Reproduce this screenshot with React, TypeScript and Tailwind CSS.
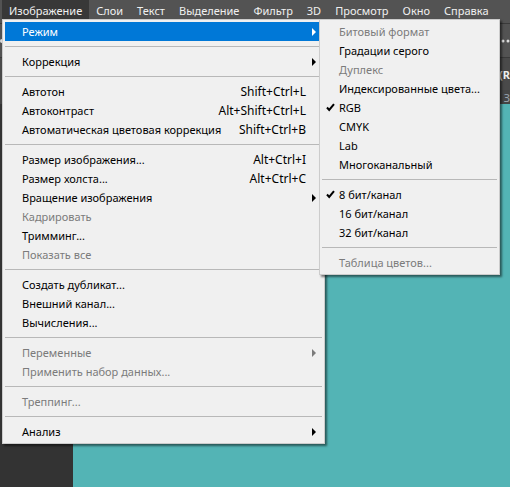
import { clsx } from 'clsx';

type Item = {
  label: string;
  shortcut?: string;
  disabled?: boolean;
  active?: boolean;
  submenu?: boolean;
  checked?: boolean;
};

const menuBar = ['Изображение', 'Слои', 'Текст', 'Выделение', 'Фильтр', '3D', 'Просмотр', 'Окно', 'Справка'];

const imageMenu: Item[][] = [
  [{ label: 'Режим', submenu: true, active: true }],
  [{ label: 'Коррекция', submenu: true }],
  [
    { label: 'Автотон', shortcut: 'Shift+Ctrl+L' },
    { label: 'Автоконтраст', shortcut: 'Alt+Shift+Ctrl+L' },
    { label: 'Автоматическая цветовая коррекция', shortcut: 'Shift+Ctrl+B' },
  ],
  [
    { label: 'Размер изображения...', shortcut: 'Alt+Ctrl+I' },
    { label: 'Размер холста...', shortcut: 'Alt+Ctrl+C' },
    { label: 'Вращение изображения', submenu: true },
    { label: 'Кадрировать', disabled: true },
    { label: 'Тримминг...' },
    { label: 'Показать все', disabled: true },
  ],
  [{ label: 'Создать дубликат...' }, { label: 'Внешний канал...' }, { label: 'Вычисления...' }],
  [
    { label: 'Переменные', submenu: true, disabled: true },
    { label: 'Применить набор данных...', disabled: true },
  ],
  [{ label: 'Треппинг...', disabled: true }],
  [{ label: 'Анализ', submenu: true }],
];

const modeMenu: Item[][] = [
  [
    { label: 'Битовый формат', disabled: true },
    { label: 'Градации серого' },
    { label: 'Дуплекс', disabled: true },
    { label: 'Индексированные цвета...' },
    { label: 'RGB', checked: true },
    { label: 'CMYK' },
    { label: 'Lab' },
    { label: 'Многоканальный' },
  ],
  [{ label: '8 бит/канал', checked: true }, { label: '16 бит/канал' }, { label: '32 бит/канал' }],
  [{ label: 'Таблица цветов...', disabled: true }],
];

function MenuItem({ item }: { item: Item }) {
  return (
    <button
      type="button"
      role="menuitem"
      disabled={item.disabled}
      className={clsx(
        'relative flex h-[19px] w-full items-center justify-between pr-4 pl-[17px] text-left whitespace-nowrap',
        item.active && 'bg-[#0078d7] text-white',
        item.disabled && 'text-[#7b7b7b]',
      )}
    >
      {item.checked && (
        <svg viewBox="0 0 9 9" className="absolute left-1 h-[9px] w-[9px]" fill="none" stroke="currentColor" strokeWidth="2">
          <path d="M1 4.5 3.2 7 8 1.2" />
        </svg>
      )}
      <span>{item.label}</span>
      {item.shortcut && <span className="text-[12px]">{item.shortcut}</span>}
      {item.submenu && (
        <svg viewBox="0 0 4 8" className="-mr-2.5 h-2 w-1" fill="currentColor">
          <path d="M0 0 4 4 0 8Z" />
        </svg>
      )}
    </button>
  );
}

function Menu({ groups, label, className }: { groups: Item[][]; label: string; className: string }) {
  return (
    <div
      role="menu"
      aria-label={label}
      className={clsx(
        'absolute border border-[#cccccc] bg-[#f0f0f0] p-0.5 text-black shadow-[2px_2px_2px_rgba(0,0,0,0.5)]',
        className,
      )}
    >
      {groups.map((group, i) => (
        <div key={i}>
          {i > 0 && <hr className="my-[5px] border-[#b8b8b8]" />}
          {group.map((item) => (
            <MenuItem key={item.label} item={item} />
          ))}
        </div>
      ))}
    </div>
  );
}

export default function App() {
  return (
    <div className="relative flex min-h-screen flex-col overflow-hidden bg-[#535353] font-['Noto_Sans',sans-serif] text-[11px] leading-[21px]">
      <nav className="relative z-10 flex h-[19px] pl-0.5 text-[#f0f0f0]">
        {menuBar.map((name, i) => (
          <button key={name} type="button" className={clsx('px-[7px]', i === 0 && 'bg-[#383838]')}>
            {name}
          </button>
        ))}
        <Menu groups={imageMenu} label="Изображение" className="top-full left-0.5 w-[323px]" />
        <Menu groups={modeMenu} label="Режим" className="top-full left-[319px] w-[181px]" />
      </nav>

      <div className="mt-1 flex h-[34px] items-center justify-between border-t border-[#3a3a3a] text-[#dddddd]">
        <span className="size-1 rounded-full bg-current" />
        <svg viewBox="0 0 9 4" className="h-1 w-[9px]" fill="currentColor">
          <circle cx="2" cy="2" r="1.5" />
          <circle cx="7" cy="2" r="1.5" />
        </svg>
      </div>
      <div className="flex h-[33px] items-center justify-end border-t border-[#3a3a3a] bg-[#4a4a4a]">
        <span className="font-bold text-[#eeeeee]">(R</span>
      </div>
      <div className="flex h-[14px] items-center justify-end bg-[#454545] text-[#9aa3ad]">З</div>
      <div className="flex flex-1">
        <aside className="w-[73px] bg-[#333333]" />
        <main className="flex-1 bg-[#53b4b5]" />
      </div>
    </div>
  );
}
